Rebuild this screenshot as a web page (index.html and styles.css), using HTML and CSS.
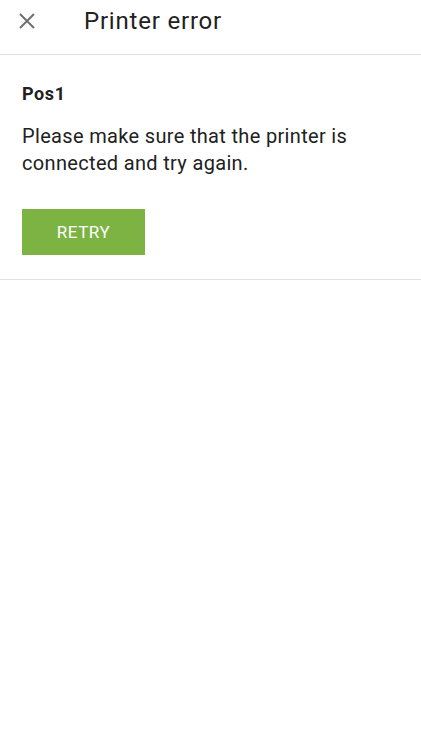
FILE: index.html
```html
<!DOCTYPE html>
<html lang="en">
<head>
<meta charset="UTF-8">
<meta name="viewport" content="width=device-width, initial-scale=1.0">
<title>Printer error</title>
<link rel="stylesheet" href="styles.css">
</head>
<body>
<header class="topbar">
  <button class="closeButton" aria-label="Close">
    <svg width="16" height="16" viewBox="0 0 16 16">
      <path d="M1 1L15 15M15 1L1 15" stroke="#6f6f6f" stroke-width="2" fill="none"/>
    </svg>
  </button>
  <h1 class="title">Printer error</h1>
</header>

<section class="errorCard">
  <h2 class="printerName">Pos1</h2>
  <p class="message">Please make sure that the printer is connected and try again.</p>
  <button class="retryButton">RETRY</button>
</section>
</body>
</html>
```

FILE: styles.css
```css
body {
  margin: 0;
  font-family: Roboto, "Noto Sans", sans-serif;
  color: #212121;
  background: #fff;
}

.topbar {
  display: flex;
  align-items: center;
  height: 42px;
  padding-bottom: 12px;
  border-bottom: 1px solid #e2e2e2;
}

.closeButton {
  display: flex;
  align-items: center;
  justify-content: center;
  width: 16px;
  height: 16px;
  margin-left: 19px;
  padding: 0;
  border: none;
  background: none;
}

.title {
  margin: 0 0 0 49px;
  font-size: 24px;
  font-weight: 400;
  line-height: 42px;
  letter-spacing: 0.8px;
}

.errorCard {
  padding: 27px 22px 24px;
  border-bottom: 1px solid #e2e2e2;
}

.printerName {
  margin: 0;
  font-size: 18px;
  font-weight: 700;
  line-height: 24px;
  letter-spacing: 0.6px;
}

.message {
  margin: 17px 0 0;
  font-size: 20px;
  line-height: 27px;
  letter-spacing: 0.33px;
}

.retryButton {
  display: block;
  width: 123px;
  height: 46px;
  margin-top: 32px;
  border: none;
  background-color: #7cb342;
  color: #fff;
  font-family: Roboto, sans-serif;
  font-size: 17px;
  letter-spacing: 0.6px;
}
```
